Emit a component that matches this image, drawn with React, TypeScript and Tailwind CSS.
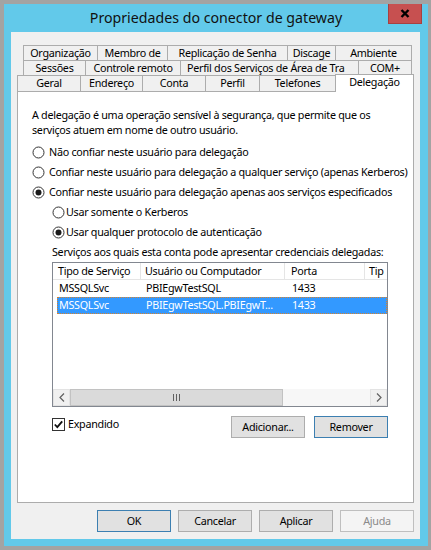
import React from "react";

const Tab = ({ label, w, selected, first }: { label: string; w: string; selected?: boolean; first?: boolean }) => (
  <div
    className={`${w} ${first ? "" : "-ml-px"} ${
      selected
        ? "relative z-10 h-[18px] -mb-px bg-white"
        : "h-full bg-[#f0f0f0]"
    } shrink-0 border-l border-r border-t border-[#acacac] overflow-hidden whitespace-nowrap text-center leading-[14px] text-black`}
  >
    {label}
  </div>
);

const Radio = ({ checked }: { checked?: boolean }) => (
  <svg width="13" height="13" viewBox="0 0 13 13" className="shrink-0">
    <circle cx="6.5" cy="6.5" r="5.5" fill="#fff" stroke="#333" />
    {checked && <circle cx="6.5" cy="6.5" r="3" fill="#1a1a1a" />}
  </svg>
);

const Btn = ({ label, primary, disabled }: { label: string; primary?: boolean; disabled?: boolean }) => (
  <div
    className={`w-[74px] h-[22px] flex items-center justify-center border ${
      disabled
        ? "bg-[#f4f4f4] border-[#bfbfbf] text-[#8a8a8a]"
        : primary
        ? "bg-[#e1e1e1] border-[#3c7fb1] text-black"
        : "bg-[#e1e1e1] border-[#adadad] text-black"
    }`}
  >
    {label}
  </div>
);

export default function App() {
  return (
    <div className="w-[431px] h-[550px] bg-[#a3a3a3] pt-[4px] pl-[4px] font-['Noto_Sans',sans-serif] text-[10.75px] tracking-[-0.28px] text-black">
      <div className="w-[424px] h-[542px] bg-[#62c9ea] flex flex-col">
        {/* title bar */}
        <div className="relative h-[28px] shrink-0 flex items-center justify-center">
          <span className="text-[14.2px] tracking-normal text-[#111]">Propriedades do conector de gateway</span>
          <div className="absolute right-[6px] top-0 w-[34px] h-[20px] bg-[#c75050] border border-[#a84040] border-t-0 flex items-center justify-center">
            <svg width="10" height="9" viewBox="0 0 10 9">
              <path d="M1.5 1 L8.5 8 M8.5 1 L1.5 8" stroke="#000" strokeWidth="2.4" />
            </svg>
          </div>
        </div>

        {/* client */}
        <div className="ml-[7px] mr-[8px] h-[507px] bg-[#f0f0f0] flex flex-col pt-[13px]">
          {/* tab rows */}
          <div className="ml-[12px] h-[15px] flex">
            <Tab first label="Organização" w="w-[75px]" />
            <Tab label="Membro de" w="w-[71px]" />
            <Tab label="Replicação de Senha" w="w-[121px]" />
            <Tab label="Discage" w="w-[49px]" />
            <Tab label="Ambiente" w="w-[77px]" />
          </div>
          <div className="ml-[12px] h-[15px] flex">
            <Tab first label="Sessões" w="w-[63px]" />
            <Tab label="Controle remoto" w="w-[96px]" />
            <div className="-ml-px w-[179px] h-full shrink-0 border-l border-r border-t border-[#acacac] bg-[#f0f0f0] overflow-hidden whitespace-nowrap pl-[6px] leading-[14px]">
              Perfil dos Serviços de Área de Tra
            </div>
            <Tab label="COM+" w="w-[54px]" />
          </div>
          <div className="ml-[6px] h-[16px] flex items-end">
            <Tab first label="Geral" w="w-[64px]" />
            <Tab label="Endereço" w="w-[63px]" />
            <Tab label="Conta" w="w-[64px]" />
            <Tab label="Perfil" w="w-[55px]" />
            <Tab label="Telefones" w="w-[77px]" />
            <Tab selected label="Delegação" w="w-[79px]" />
          </div>

          {/* tab page */}
          <div className="ml-[6px] w-[397px] h-[412px] shrink-0 bg-white border border-[#acacac] pl-[14px] pt-[16px] flex flex-col">
            <p className="leading-[15px] whitespace-nowrap">
              A delegação é uma operação sensível à segurança, que permite que os
              <br />
              serviços atuem em nome de outro usuário.
            </p>
            <div className="mt-[4px] flex flex-col whitespace-nowrap">
              <div className="h-[20px] flex items-center gap-[4px]">
                <Radio />
                <span>Não confiar neste usuário para delegação</span>
              </div>
              <div className="h-[20px] flex items-center gap-[4px]">
                <Radio />
                <span>Confiar neste usuário para delegação a qualquer serviço (apenas Kerberos)</span>
              </div>
              <div className="h-[20px] flex items-center gap-[4px]">
                <Radio checked />
                <span>Confiar neste usuário para delegação apenas aos serviços especificados</span>
              </div>
              <div className="ml-[20px] h-[20px] flex items-center gap-[1px]">
                <Radio />
                <span>Usar somente o Kerberos</span>
              </div>
              <div className="ml-[20px] h-[20px] flex items-center gap-[1px]">
                <Radio checked />
                <span>Usar qualquer protocolo de autenticação</span>
              </div>
              <div className="ml-[20px] h-[20px] flex items-center">
                Serviços aos quais esta conta pode apresentar credenciais delegadas:
              </div>
            </div>

            {/* list view */}
            <div className="ml-[20px] w-[336px] h-[145px] shrink-0 border border-[#828790] bg-white flex flex-col overflow-hidden">
              <div className="h-[17px] flex border-b border-[#e5e5e5] leading-[16px] whitespace-nowrap">
                <div className="w-[88px] shrink-0 pl-[5px] border-r border-[#e5e5e5]">Tipo de Serviço</div>
                <div className="w-[144px] shrink-0 pl-[4px] border-r border-[#e5e5e5]">Usuário ou Computador</div>
                <div className="w-[80px] shrink-0 pl-[6px] border-r border-[#e5e5e5]">Porta</div>
                <div className="flex-1 pl-[4px] overflow-hidden">Tip</div>
              </div>
              <div className="h-[17px] ml-[4px] flex items-center whitespace-nowrap">
                <div className="w-[84px] shrink-0 pl-[2px]">MSSQLSvc</div>
                <div className="w-[144px] shrink-0 pl-[5px]">PBIEgwTestSQL</div>
                <div className="w-[80px] shrink-0 pl-[7px]">1433</div>
              </div>
              <div className="h-[17px] ml-[4px] flex items-center whitespace-nowrap bg-[#3399ff] text-white border border-dotted border-[#d9822b]">
                <div className="w-[83px] shrink-0 pl-[1px]">MSSQLSvc</div>
                <div className="w-[144px] shrink-0 pl-[5px]">PBIEgwTestSQL.PBIEgwT...</div>
                <div className="w-[80px] shrink-0 pl-[7px]">1433</div>
              </div>
              <div className="flex-1" />
              {/* horizontal scrollbar */}
              <div className="h-[17px] flex bg-[#f7f7f7]">
                <div className="w-[17px] h-full flex items-center justify-center border border-[#e3e3e3] bg-[#f0f0f0]">
                  <svg width="6" height="9" viewBox="0 0 6 9">
                    <path d="M5 0.5 L1 4.5 L5 8.5" stroke="#606060" fill="none" strokeWidth="1.2" />
                  </svg>
                </div>
                <div className="w-[213px] h-full bg-[#dadada] border border-[#c2c2c2] flex items-center justify-center">
                  <svg width="7" height="7" viewBox="0 0 7 7">
                    <path d="M0.5 0 V7 M3.5 0 V7 M6.5 0 V7" stroke="#606060" strokeWidth="1" />
                  </svg>
                </div>
                <div className="flex-1" />
                <div className="w-[17px] h-full flex items-center justify-center border border-[#e3e3e3] bg-[#f0f0f0]">
                  <svg width="6" height="9" viewBox="0 0 6 9">
                    <path d="M1 0.5 L5 4.5 L1 8.5" stroke="#606060" fill="none" strokeWidth="1.2" />
                  </svg>
                </div>
              </div>
            </div>

            {/* checkbox + list buttons */}
            <div className="ml-[20px] w-[336px] mt-[9px] flex items-start">
              <div className="mt-[1px] flex items-center gap-[3px]">
                <svg width="13" height="13" viewBox="0 0 13 13">
                  <rect x="0.5" y="0.5" width="12" height="12" fill="#fff" stroke="#333" />
                  <path d="M2.8 6.5 L5.3 9.2 L10.2 3.3" stroke="#111" strokeWidth="1.8" fill="none" />
                </svg>
                <span className="leading-[14px]">Expandido</span>
              </div>
              <div className="ml-auto flex gap-[9px]">
                <Btn label="Adicionar..." />
                <Btn label="Remover" primary />
              </div>
            </div>
          </div>

          {/* dialog buttons */}
          <div className="mt-[7px] pr-[6px] flex justify-end gap-[7px]">
            <Btn label="OK" primary />
            <Btn label="Cancelar" />
            <Btn label="Aplicar" />
            <Btn label="Ajuda" disabled />
          </div>
        </div>
      </div>
    </div>
  );
}
